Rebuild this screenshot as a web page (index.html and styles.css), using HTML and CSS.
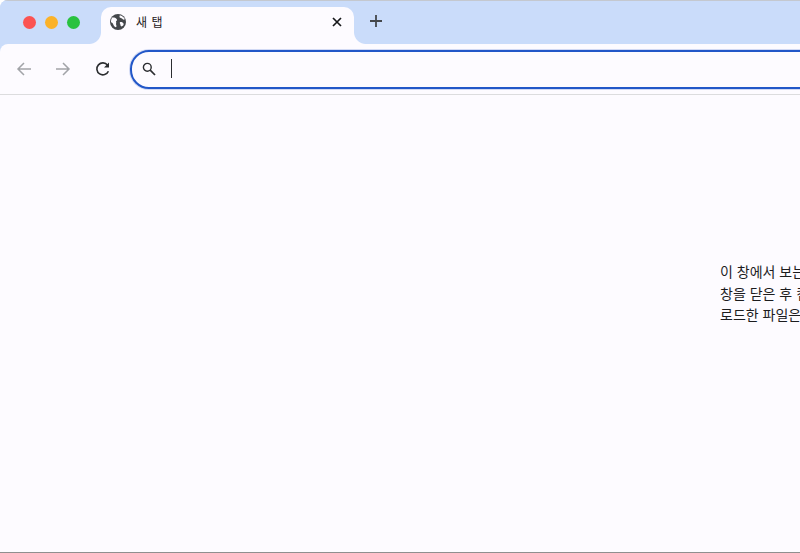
FILE: index.html
```html
<!DOCTYPE html>
<html lang="ko">
<head>
<meta charset="utf-8">
<title>새 탭</title>
<link rel="stylesheet" href="styles.css">
</head>
<body>
<div class="window">
  <header class="tabstrip">
    <div class="lights">
      <span class="light red"></span>
      <span class="light yellow"></span>
      <span class="light green"></span>
    </div>
    <div class="tab">
      <svg class="globe" width="16" height="16" viewBox="0 0 16 16"><circle cx="8" cy="8" r="8" fill="#44474b"/><path d="M2.2 3.6C4 3.4 5.6 3.9 6.6 4.9 7.4 5.7 7 6.6 6.2 7.1 5.7 7.5 6.6 8.5 6.1 9.4 5.7 10.2 6.7 11.4 6.5 12.2 6.4 12.9 5.8 13.4 5.1 13 3.9 12.4 3.5 11 3 9.8 2.6 8.9 1.7 8.6 1 8.2 1 6.4 1.3 4.8 2.2 3.6Z" fill="#fdfbff"/><path d="M9.8 1.2C9.6 2.1 9.2 2.8 9.8 3.6 10.4 4.3 11.4 3.9 12 4.6 12.5 5.1 13 5.6 13.8 5.7 14.2 5.7 14.6 5.5 14.8 5.1 14 3.3 12 1.7 9.8 1.2ZM10.4 8C11.5 7.8 12.6 8.4 13.3 9.2 13.9 9.9 13.7 10.9 13.1 11.6 12.4 12.3 11.5 12.7 10.9 12.1 10.2 11.4 10.6 10.6 10.1 9.8 9.7 9.1 9.6 8.2 10.4 8Z" fill="#fdfbff"/></svg>
      <span class="tab-title">새 탭</span>
      <svg class="close" width="10" height="10" viewBox="0 0 10 10"><path d="M1 1l8 8M9 1L1 9" stroke="#17181a" stroke-width="1.7" fill="none"/></svg>
    </div>
    <svg class="plus" width="12" height="12" viewBox="0 0 12 12"><path d="M6 0v12M0 6h12" stroke="#44474b" stroke-width="1.8" fill="none"/></svg>
  </header>
  <nav class="toolbar">
    <svg class="nav-icon back" width="16" height="16" viewBox="0 0 16 16"><path d="M15 8H2M8 2 2 8l6 6" stroke="#a2a4a8" stroke-width="1.5" fill="none"/></svg>
    <svg class="nav-icon forward" width="16" height="16" viewBox="0 0 16 16"><path d="M1 8h13M8 2l6 6-6 6" stroke="#a2a4a8" stroke-width="1.5" fill="none"/></svg>
    <svg class="nav-icon reload" width="16" height="16" viewBox="0 0 16 16"><path d="M13.4 10.2A6 6 0 1 1 12.6 4.2" stroke="#2b2d30" stroke-width="1.6" fill="none"/><path d="M14 1.6V6.6H9Z" fill="#2b2d30"/></svg>
    <div class="omnibox">
      <svg class="search" width="14" height="14" viewBox="0 0 14 14"><circle cx="5.3" cy="5.3" r="3.9" stroke="#2b2d30" stroke-width="1.4" fill="none"/><path d="M8.2 8.2 13 13" stroke="#2b2d30" stroke-width="1.7" fill="none"/></svg>
      <span class="caret"></span>
    </div>
  </nav>
  <main class="page">
    <div class="message">
      <p>이 창에서 보는 페이지는</p>
      <p>창을 닫은 후 컴퓨터 기록에</p>
      <p>로드한 파일은 컴퓨터에</p>
    </div>
  </main>
</div>
</body>
</html>
```
FILE: styles.css
```css
* { box-sizing: border-box; }
html, body { margin: 0; height: 100%; overflow: hidden; background: #fff; }
.window {
  width: 800px;
  height: 553px;
  display: flex;
  flex-direction: column;
  overflow: hidden;
  background: #cadcfa;
  border-radius: 8px 0 0 0;
  border-bottom: 1px solid #8f8f8f;
  font-family: "Noto Sans CJK KR", "Noto Sans", sans-serif;
  color: #1c1c1e;
}
.tabstrip {
  height: 44px;
  flex: none;
  display: flex;
  align-items: flex-start;
  background: #cadcfa;
  border-top: 1px solid #c4c8cf;
}
.lights { display: flex; gap: 9px; margin: 15px 0 0 23px; width: 78px; flex: none; }
.light { width: 13px; height: 13px; border-radius: 50%; }
.red { background: #fb5352; }
.yellow { background: #fbb229; }
.green { background: #29c23f; }
.tab {
  width: 253px;
  height: 37px;
  margin-top: 6px;
  flex: none;
  display: flex;
  align-items: center;
  padding: 0 12px 8px 9px;
  background: #fdfbff;
  border-radius: 10px 10px 0 0;
  position: relative;
}
.tab::after {
  content: "";
  position: absolute;
  right: -12px;
  bottom: 0;
  width: 12px;
  height: 12px;
  background: radial-gradient(circle at 100% 0, #cadcfa 11.5px, #fdfbff 12.5px);
}
.tab::before {
  content: "";
  position: absolute;
  left: -12px;
  bottom: 0;
  width: 12px;
  height: 12px;
  background: radial-gradient(circle at 0 0, #cadcfa 11.5px, #fdfbff 12.5px);
}
.globe { flex: none; }
.tab-title { margin-left: 10px; flex: 1; font-size: 12px; line-height: 16px; color: #1f2022; word-spacing: 1px; }
.close { flex: none; }
.plus { margin: 14px 0 0 16px; flex: none; }
.toolbar {
  height: 51px;
  flex: none;
  display: flex;
  align-items: center;
  background: #fdfbff;
  border-bottom: 1px solid #dcdcde;
  border-radius: 8px 0 0 0;
  padding: 0 0 1px 16px;
}
.nav-icon { flex: none; }
.forward { margin-left: 23px; }
.reload { margin-left: 24px; }
.omnibox {
  flex: none;
  width: 800px;
  height: 39px;
  margin: 1px 0 0 19px;
  display: flex;
  align-items: center;
  padding: 0 0 1px 10px;
  border: 2px solid #2257c8;
  border-radius: 19px;
  background: #fdfbff;
  box-shadow: 0 0 0 1px rgba(34, 87, 200, 0.2);
}
.caret { width: 1px; height: 19px; margin-left: 15px; background: #2b2d30; }
.page { flex: 1; position: relative; padding: 166px 0 0 720px; background: #fdfbff; }
.message { width: 300px; font-size: 14px; line-height: 21.6px; color: #1c1c1e; white-space: nowrap; }
.message p { margin: 0; }
```
